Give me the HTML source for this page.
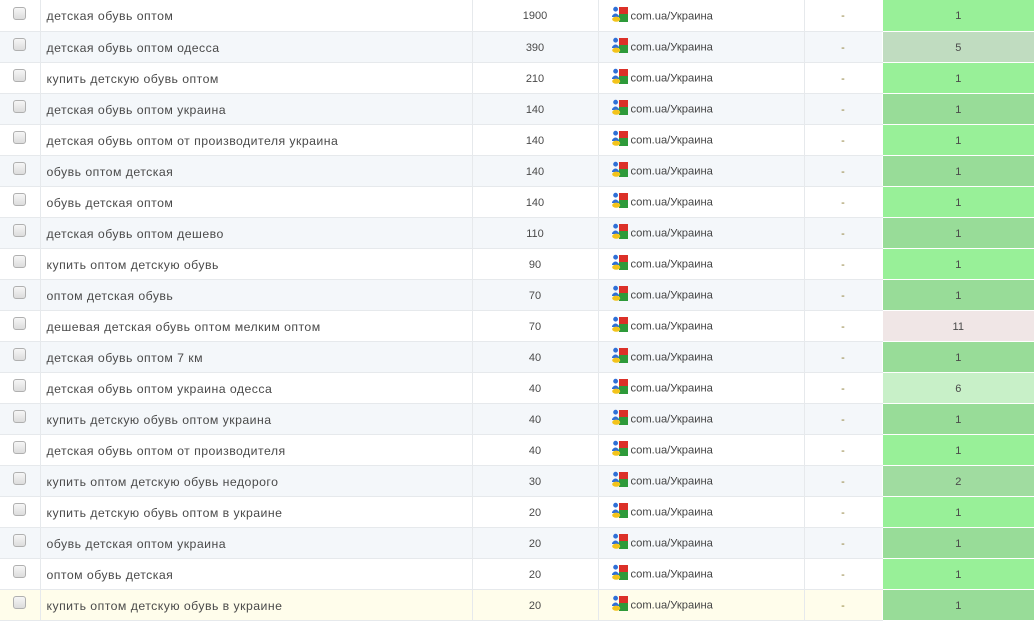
<!DOCTYPE html>
<html><head><meta charset="utf-8"><style>
body{margin:0;width:1036px;height:619px;overflow:hidden;background:#fff;font-family:"Liberation Sans","DejaVu Sans",sans-serif;font-size:11px;color:#4a4a4a}
table{border-collapse:collapse;width:1034px;table-layout:fixed}
td{height:30px;border-bottom:1px solid #e6e9ec;padding:2px 0 0 0;box-sizing:border-box;vertical-align:middle;white-space:nowrap}
tr{height:31px}
td+td{border-left:1px solid #e6e9ec}
tr.s td{background:#f4f7fa}
tr.h td{background:#fffdeb}
.cb{text-align:center;padding-top:0}
.cb span{display:inline-block;width:11px;height:11px;border:1px solid #b0b0b0;border-radius:3px;background:linear-gradient(#f6f6f6,#dcdcdc);vertical-align:middle;margin-top:-4px}
.kw{padding-left:6px;font-size:12.3px;letter-spacing:0.45px}
.n{text-align:center}
.e{padding-left:13px;font-size:11.2px;color:#444}
.e svg{vertical-align:middle;margin-right:3px;margin-top:-4px}
.d{text-align:center;color:#8a7a30}
.p{text-align:center;border-bottom:1px solid #fff!important;border-left:1px solid #fff!important}
</style></head><body>
<table>
<colgroup><col style="width:40px"><col style="width:432px"><col style="width:126px"><col style="width:206px"><col style="width:78px"><col style="width:152px"></colgroup>
<tbody id="b"></tbody></table>
<script>
var d=[["детская обувь оптом",1900,1,"#98f098"],["детская обувь оптом одесса",390,5,"#c0dcc0"],["купить детскую обувь оптом",210,1,"#98f098"],["детская обувь оптом украина",140,1,"#98dc98"],["детская обувь оптом от производителя украина",140,1,"#98f098"],["обувь оптом детская",140,1,"#98dc98"],["обувь детская оптом",140,1,"#98f098"],["детская обувь оптом дешево",110,1,"#98dc98"],["купить оптом детскую обувь",90,1,"#98f098"],["оптом детская обувь",70,1,"#98dc98"],["дешевая детская обувь оптом мелким оптом",70,11,"#f0e6e6"],["детская обувь оптом 7 км",40,1,"#98dc98"],["детская обувь оптом украина одесса",40,6,"#c8f0c8"],["купить детскую обувь оптом украина",40,1,"#98dc98"],["детская обувь оптом от производителя",40,1,"#98f098"],["купить оптом детскую обувь недорого",30,2,"#a0dca0"],["купить детскую обувь оптом в украине",20,1,"#98f098"],["обувь детская оптом украина",20,1,"#98dc98"],["оптом обувь детская",20,1,"#98f098"],["купить оптом детскую обувь в украине",20,1,"#98dc98"]];
var ic='<svg width="16" height="17" viewBox="0 0 16 17"><rect x="7" y="1" width="9" height="8" fill="#dc3028"/><rect x="7" y="8" width="9" height="8" fill="#2e9a3a"/><circle cx="3.6" cy="3.2" r="2.4" fill="#2f6fd6"/><path d="M0 10 Q3.5 5 7 10 L7 11 L0 11Z" fill="#2f6fd6"/><ellipse cx="4.2" cy="13.2" rx="4" ry="2.6" fill="#f3c31a"/></svg>';
var h="";d.forEach(function(r,i){var c=i==19?"h":(i%2?"s":"");h+='<tr class="'+c+'"><td class="cb"><span></span></td><td class="kw">'+r[0]+'</td><td class="n">'+r[1]+'</td><td class="e">'+ic+'com.ua/Украина</td><td class="d">-</td><td class="p" style="background:'+r[3]+'">'+r[2]+'</td></tr>'});
document.getElementById("b").innerHTML=h;
</script>
</body></html>
